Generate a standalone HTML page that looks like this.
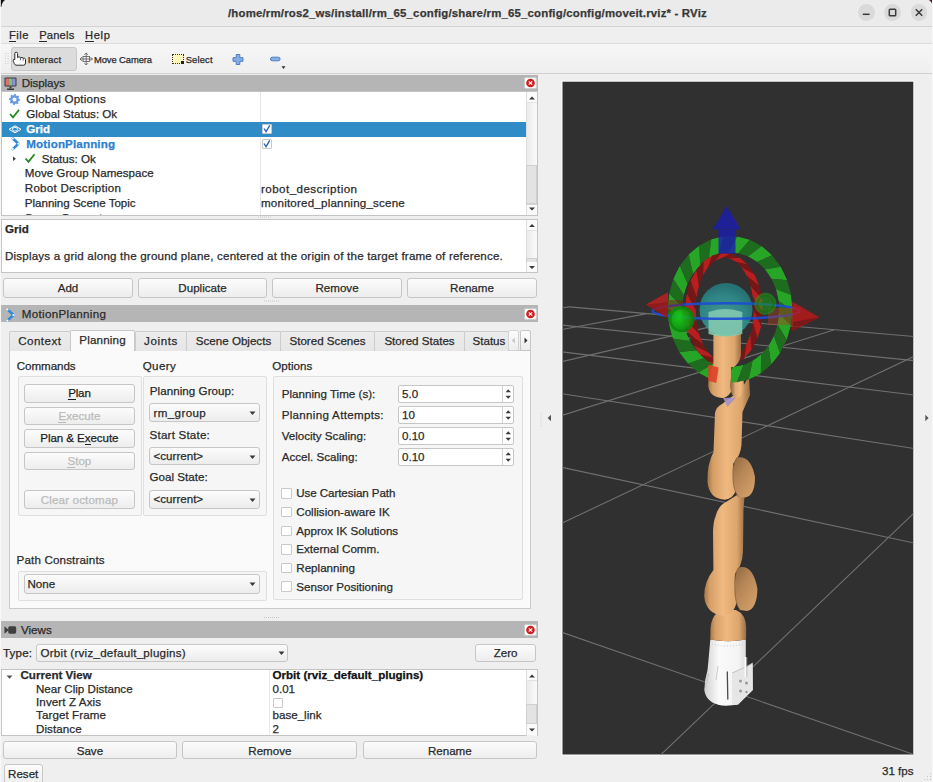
<!DOCTYPE html><html><head><meta charset="utf-8"><style>
*{margin:0;padding:0;box-sizing:border-box}
html,body{width:933px;height:782px;overflow:hidden;background:#efefef}
body{position:relative;font-family:"Liberation Sans",sans-serif;font-size:11.6px;color:#2a2a2a}
.a{position:absolute}
.t{position:absolute;white-space:nowrap;-webkit-text-stroke:0.25px currentColor}
.btn{position:absolute;border:1px solid #c6c6c6;border-radius:3px;background:linear-gradient(#fcfcfc,#ededed)}
.hdr{position:absolute;left:1px;width:537px;background:#b5b5b5}
.cls{position:absolute;width:13px;height:12px;background:#fcfcfc;border:1px solid #cdcdcd;border-radius:2px}
.tree{position:absolute;background:#fff;border:1px solid #c4c4c4}
.sb{position:absolute;width:11px;background:linear-gradient(90deg,#ebebeb,#fafafa);border-left:1px solid #dedede}
.grp{position:absolute;border:1px solid #dfdfdf;border-radius:2px;background:#f6f6f6}
.combo{position:absolute;border:1px solid #c6c6c6;border-radius:3px;background:linear-gradient(#fcfcfc,#ececec)}
.spin{position:absolute;border:1px solid #c6c6c6;border-radius:2px;background:#fff}
.cb{position:absolute;width:11px;height:11px;border:1px solid #c9c9c9;background:#fff;border-radius:1px}
.tab{position:absolute;top:331px;height:20px;border:1px solid #cccccc;border-bottom:none;border-radius:2px 2px 0 0;background:linear-gradient(#ececec,#e6e6e6)}
.dis{color:#bbbbbb}
u{text-decoration:none;border-bottom:1px solid currentColor}
</style></head><body>
<div class="a" style="left:0;top:0;width:933px;height:27px;background:#ebebeb;border-bottom:1px solid #d3d3d3"></div>
<div class="a" style="left:0;top:0;width:1px;height:782px;background:#f8f8f8"></div><div class="a" style="left:932px;top:0;width:1px;height:782px;background:#f8f8f8"></div>
<div class="t" style="left:228px;top:6.15px;font-size:11.4px;line-height:14px;font-weight:bold;color:#383838;letter-spacing:0.192px;">/home/rm/ros2_ws/install/rm_65_config/share/rm_65_config/config/moveit.rviz* - RViz</div>
<div class="a" style="left:857.8000000000001px;top:4.1px;width:16.8px;height:16.8px;border-radius:50%;background:#dadada"></div>
<div class="a" style="left:884.1px;top:4.1px;width:16.8px;height:16.8px;border-radius:50%;background:#dadada"></div>
<div class="a" style="left:910.6px;top:4.1px;width:16.8px;height:16.8px;border-radius:50%;background:#dadada"></div>
<svg class="a" style="left:0;top:0" width="933" height="27"><g stroke="#3a3a3a" stroke-width="1.5" fill="none"><line x1="862.8" y1="14.3" x2="869.6" y2="14.3"/><rect x="889.3" y="9.3" width="6.4" height="6.4" rx="0.8"/><line x1="915.8" y1="9.3" x2="922.2" y2="15.7"/><line x1="922.2" y1="9.3" x2="915.8" y2="15.7"/></g><path d="M0.8 0 L5 0 Q2 2 1.3 7 L0.8 7 Z" fill="#111"/><path d="M929 0 L932 0 L932 3.5 Q931 1 929 0Z" fill="#6a0a30"/></svg>
<div class="a" style="left:1px;top:27px;width:931px;height:17px;background:#efefef;border-bottom:1px solid #dcdcdc"></div>
<div class="t" style="left:9px;top:28.22px;font-size:11.2px;line-height:14px;letter-spacing:0.451px;"><u>F</u>ile</div>
<div class="t" style="left:39.2px;top:28.22px;font-size:11.2px;line-height:14px;letter-spacing:0.176px;"><u>P</u>anels</div>
<div class="t" style="left:84.9px;top:28.22px;font-size:11.2px;line-height:14px;letter-spacing:0.690px;"><u>H</u>elp</div>
<div class="a" style="left:1px;top:44px;width:931px;height:30px;background:linear-gradient(#f6f6f6,#efefef);border-bottom:1px solid #d0d0d0"></div>
<div class="a" style="left:11px;top:47px;width:66px;height:24px;background:#dcdcdc;border:1px solid #c8c8c8;border-radius:3px"></div>
<div class="t" style="left:27.7px;top:53.57px;font-size:9.6px;line-height:12px;letter-spacing:0.214px;">Interact</div>
<div class="t" style="left:94px;top:53.64px;font-size:9.4px;line-height:12px;letter-spacing:-0.087px;">Move Camera</div>
<div class="a" style="left:172px;top:53.5px;width:12px;height:10.5px;background:#fbf6bd;border:1px dotted #333"></div><div class="a" style="left:181px;top:61px;width:3px;height:3px;background:#222"></div>
<div class="t" style="left:185.7px;top:53.64px;font-size:9.4px;line-height:12px;letter-spacing:0.167px;">Select</div>
<svg class="a" style="left:0;top:44px" width="300" height="30"><path d="M236.2 10.5 h3.6 v3.2 h3.2 v3.6 h-3.2 v3.2 h-3.6 v-3.2 h-3.2 v-3.6 h3.2 z" fill="#86aee4" stroke="#4e7ec4" stroke-width="1" stroke-linejoin="round"/><rect x="270.5" y="13.2" width="9.6" height="3.6" rx="1.8" fill="#86aee4" stroke="#4e7ec4" stroke-width="1"/><path d="M281.5 22.3 h4 l-2 2.6z" fill="#333"/><path d="M15.6 21.2 L14.4 19.6 Q13 17.6 13.2 16.1 Q13.5 14.8 14.8 15.6 L14.8 9.6 Q14.8 8.2 16.2 8.2 Q17.6 8.2 17.6 9.6 L17.6 13.6 Q18 12.8 19.2 12.9 Q20.4 13 20.5 14.1 Q20.9 13.3 22 13.4 Q23.2 13.5 23.2 14.6 Q23.7 14 24.5 14.2 Q25.5 14.5 25.5 15.6 L25.5 19 Q25.5 21.2 23.6 21.2 Z" fill="#fff" stroke="#2a2a2a" stroke-width="1" stroke-linejoin="round"/><path d="M20.5 14.1 v2.2 M23.2 14.6 v2" stroke="#2a2a2a" stroke-width="0.7"/><g stroke="#666" stroke-width="0.9" fill="none"><path d="M86.2 9 v12 M80 15 h12.5 M84.4 10.8 l1.8-1.8 1.8 1.8 M84.4 19.2 l1.8 1.8 1.8-1.8 M81.8 13.2 l-1.8 1.8 1.8 1.8 M90.6 13.2 l1.8 1.8-1.8 1.8"/><rect x="83" y="12.5" width="6.5" height="5"/></g><g fill="#cfcfcf"><rect x="5" y="9" width="1" height="1"/><rect x="5" y="11.5" width="1" height="1"/><rect x="5" y="14" width="1" height="1"/><rect x="5" y="16.5" width="1" height="1"/><rect x="5" y="19" width="1" height="1"/><rect x="7.5" y="9" width="1" height="1"/><rect x="7.5" y="11.5" width="1" height="1"/><rect x="7.5" y="14" width="1" height="1"/><rect x="7.5" y="16.5" width="1" height="1"/><rect x="7.5" y="19" width="1" height="1"/></g></svg>
<div class="hdr" style="top:75px;height:17px"></div>
<div class="t" style="left:21.7px;top:76.18px;font-size:11.6px;line-height:14px;letter-spacing:-0.073px;">Displays</div>
<div class="cls" style="left:523.5px;top:77px"></div><svg class="a" style="left:523.5px;top:77px" width="13" height="12"><circle cx="6.5" cy="6" r="4.3" fill="#d01c1c"/><path d="M4.8 4.3 l3.4 3.4 M8.2 4.3 l-3.4 3.4" stroke="#fff" stroke-width="1.2"/></svg>
<svg class="a" style="left:3px;top:76px" width="16" height="15"><rect x="1.5" y="1.5" width="12" height="9" rx="1" fill="#3a3a3a"/><rect x="2.5" y="2.5" width="3.4" height="7" fill="#e07070"/><rect x="5.9" y="2.5" width="3.3" height="7" fill="#70c870"/><rect x="9.2" y="2.5" width="3.3" height="7" fill="#9090e0"/><rect x="6.5" y="10.5" width="2" height="2" fill="#3a3a3a"/><rect x="4" y="12.5" width="7" height="1.5" fill="#3a3a3a"/></svg>
<div class="tree" style="left:1px;top:91px;width:537px;height:125px"></div>
<div class="a" style="left:2px;top:92px;width:524px;height:123px;overflow:hidden">
<div class="a" style="left:257.5px;top:0;width:1px;height:123px;background:#e6e6e6"></div>
<div class="a" style="left:0;top:30px;width:524px;height:14.5px;background:#308cc6"></div>
<div class="t" style="left:24.3px;top:0.48px;font-size:11.6px;line-height:14px;letter-spacing:0.207px;">Global Options</div>
<div class="t" style="left:24.3px;top:15.28px;font-size:11.6px;line-height:14px;">Global Status: Ok</div>
<div class="t" style="left:24.3px;top:30.08px;font-size:11.6px;line-height:14px;color:#fff;font-weight:bold">Grid</div>
<div class="t" style="left:24.3px;top:44.88px;font-size:11.6px;line-height:14px;color:#2b7fd0;font-weight:bold;letter-spacing:0.136px;">MotionPlanning</div>
<div class="t" style="left:39.7px;top:59.68px;font-size:11.6px;line-height:14px;letter-spacing:-0.003px;">Status: Ok</div>
<div class="t" style="left:22.8px;top:74.48px;font-size:11.6px;line-height:14px;">Move Group Namespace</div>
<div class="t" style="left:22.8px;top:89.28px;font-size:11.6px;line-height:14px;letter-spacing:0.253px;">Robot Description</div>
<div class="t" style="left:22.8px;top:104.08px;font-size:11.6px;line-height:14px;letter-spacing:-0.026px;">Planning Scene Topic</div>
<div class="t" style="left:22.8px;top:118.88px;font-size:11.6px;line-height:14px;">Scene Geometry</div>
<div class="t" style="left:259px;top:89.58px;font-size:11.6px;line-height:14px;letter-spacing:0.440px;">robot_description</div>
<div class="t" style="left:259px;top:104.28px;font-size:11.6px;line-height:14px;letter-spacing:0.199px;">monitored_planning_scene</div>
<div class="cb" style="left:259.5px;top:31.5px;width:10.5px;height:10.5px"></div><div class="cb" style="left:259.5px;top:46.5px;width:10.5px;height:10.5px"></div>
<svg class="a" style="left:0;top:0" width="300" height="123"><path d="M262 36.5 l2 3.2 l3.8-6.4" stroke="#2860c0" stroke-width="1.3" fill="none"/><path d="M262 51.5 l2 3.2 l3.8-6.4" stroke="#2860c0" stroke-width="1.3" fill="none"/><path d="M8 22 l3 3.4 l6-7.6" stroke="#178a17" stroke-width="1.7" fill="none"/><path d="M23.5 66.5 l3 3.4 l6-7.6" stroke="#178a17" stroke-width="1.7" fill="none"/><path d="M11 64.5 l3 2.3 l-3 2.3z" fill="#444"/><path d="M12.50 1.90 L13.59 2.01 L14.15 3.53 L14.89 3.92 L16.46 3.54 L17.16 4.39 L16.47 5.85 L16.72 6.66 L18.10 7.50 L17.99 8.59 L16.47 9.15 L16.08 9.89 L16.46 11.46 L15.61 12.16 L14.15 11.47 L13.34 11.72 L12.50 13.10 L11.41 12.99 L10.85 11.47 L10.11 11.08 L8.54 11.46 L7.84 10.61 L8.53 9.15 L8.28 8.34 L6.90 7.50 L7.01 6.41 L8.53 5.85 L8.92 5.11 L8.54 3.54 L9.39 2.84 L10.85 3.53 L11.66 3.28Z M14.50 7.5 A2 2 0 1 0 10.50 7.5 A2 2 0 1 0 14.50 7.5Z" fill="#6a9be0" fill-rule="evenodd"/><path d="M7 37.3 l6-3.5 l6 3.5 l-6 3.5z" stroke="#fff" stroke-width="1" fill="none"/><ellipse cx="13" cy="37.3" rx="2.6" ry="1.9" stroke="#fff" stroke-width="0.9" fill="none"/><path d="M10.8 46.5 l5.6 5.3 l-5.6 5.3" stroke="#2f8ad8" stroke-width="2.6" fill="none" stroke-linejoin="round" stroke-linecap="round"/><circle cx="10.8" cy="46.5" r="1" fill="#fff"/><circle cx="16.4" cy="51.8" r="1" fill="#fff"/><circle cx="10.8" cy="57.1" r="1" fill="#fff"/></svg>
</div>
<div class="sb" style="left:526px;top:92px;height:123px"></div>
<div class="a" style="left:526px;top:92px;width:11px;height:11px;background:#fafafa;border-left:1px solid #dedede;border-bottom:1px solid #e2e2e2"></div>
<div class="a" style="left:526px;top:204px;width:11px;height:11px;background:#fafafa;border-left:1px solid #dedede;border-top:1px solid #d6d6d6"></div>
<div class="a" style="left:526px;top:165px;width:11px;height:39px;background:#e3e3e3;border:1px solid #d0d0d0"></div>
<svg class="a" style="left:526px;top:92px" width="12" height="124"><path d="M3 7.5 h6 l-3-3z M3 115.5 h6 l-3 3z" fill="#3a3a3a"/></svg>
<div class="tree" style="left:1px;top:219px;width:537px;height:54px"></div>
<div class="t" style="left:5px;top:222.48px;font-size:11.6px;line-height:14px;font-weight:bold;color:#111letter-spacing:0.052px;">Grid</div>
<div class="t" style="left:5px;top:248.78px;font-size:11.6px;line-height:14px;letter-spacing:0.193px;">Displays a grid along the ground plane, centered at the origin of the target frame of reference.</div>
<div class="sb" style="left:526px;top:220px;height:52px"></div>
<div class="a" style="left:526px;top:220px;width:11px;height:11px;background:#fafafa;border-left:1px solid #dedede;border-bottom:1px solid #e2e2e2"></div>
<div class="a" style="left:526px;top:258px;width:11px;height:5px;background:#e3e3e3;border:1px solid #d0d0d0"></div>
<div class="a" style="left:526px;top:262px;width:11px;height:10px;background:#fafafa;border-left:1px solid #dedede"></div>
<svg class="a" style="left:526px;top:220px" width="12" height="52"><path d="M3 7 h6 l-3-3z M3 46 h6 l-3 3z" fill="#3a3a3a"/></svg>
<div class="btn" style="left:3px;top:278px;width:130px;height:20px"></div>
<div class="t" style="left:3px;width:130px;text-align:center;top:280.78px;font-size:11.6px;line-height:14px;">Add</div>
<div class="btn" style="left:138px;top:278px;width:129px;height:20px"></div>
<div class="t" style="left:138px;width:129px;text-align:center;top:280.78px;font-size:11.6px;line-height:14px;">Duplicate</div>
<div class="btn" style="left:272px;top:278px;width:130px;height:20px"></div>
<div class="t" style="left:272px;width:130px;text-align:center;top:280.78px;font-size:11.6px;line-height:14px;">Remove</div>
<div class="btn" style="left:407px;top:278px;width:130px;height:20px"></div>
<div class="t" style="left:407px;width:130px;text-align:center;top:280.78px;font-size:11.6px;line-height:14px;">Rename</div>
<div class="hdr" style="top:305px;height:17px"></div>
<div class="t" style="left:21.8px;top:307.28px;font-size:11.6px;line-height:14px;letter-spacing:0.328px;">MotionPlanning</div>
<div class="cls" style="left:523.5px;top:308px"></div><svg class="a" style="left:523.5px;top:308px" width="13" height="12"><circle cx="6.5" cy="6" r="4.3" fill="#d01c1c"/><path d="M4.8 4.3 l3.4 3.4 M8.2 4.3 l-3.4 3.4" stroke="#fff" stroke-width="1.2"/></svg>
<svg class="a" style="left:5px;top:307px" width="14" height="16"><path d="M2.5 2.5 l6 5.5 l-6 5.5" stroke="#2f8ad8" stroke-width="2.4" fill="none" stroke-linejoin="round"/><circle cx="2.5" cy="2.5" r="1.1" fill="#fff"/><circle cx="8.5" cy="8" r="1.1" fill="#fff"/><circle cx="2.5" cy="13.5" r="1.1" fill="#fff"/></svg>
<div class="a" style="left:8.5px;top:350px;width:522.5px;height:259px;background:#fafafa;border:1px solid #cbcbcb"></div>
<div class="tab" style="left:8.6px;width:62.4px"></div>
<div class="t" style="left:8.6px;width:62.4px;text-align:center;top:334.28px;font-size:11.6px;line-height:14px;letter-spacing:0.439px;">Context</div>
<div class="tab" style="left:135px;width:52.0px"></div>
<div class="t" style="left:135px;width:52px;text-align:center;top:333.98px;font-size:11.6px;line-height:14px;letter-spacing:0.581px;">Joints</div>
<div class="tab" style="left:186px;width:95.0px"></div>
<div class="t" style="left:186px;width:95px;text-align:center;top:333.98px;font-size:11.6px;line-height:14px;letter-spacing:-0.001px;">Scene Objects</div>
<div class="tab" style="left:280px;width:95.0px"></div>
<div class="t" style="left:280px;width:95px;text-align:center;top:333.98px;font-size:11.6px;line-height:14px;">Stored Scenes</div>
<div class="tab" style="left:374px;width:91.0px"></div>
<div class="t" style="left:374px;width:91px;text-align:center;top:333.98px;font-size:11.6px;line-height:14px;">Stored States</div>
<div class="tab" style="left:464px;width:45px"></div>
<div class="a" style="left:464px;top:331px;width:44px;height:20px;overflow:hidden"><div class="t" style="left:8.5px;top:2.98px;font-size:11.6px;line-height:14px;">Status</div></div>
<div class="tab" style="left:69.8px;top:329.5px;width:65.5px;height:21.5px;background:#fafafa;border-color:#c8c8c8"></div>
<div class="t" style="left:69.8px;width:65.50000000000001px;text-align:center;top:333.48px;font-size:11.6px;line-height:14px;letter-spacing:0.168px;">Planning</div>
<div class="btn" style="left:508px;top:329.5px;width:11px;height:21.5px;border-radius:2px;border-color:#d4d4d4"></div><div class="btn" style="left:519.5px;top:329.5px;width:11.5px;height:21.5px;border-radius:2px"></div>
<svg class="a" style="left:508px;top:330px" width="24" height="22"><path d="M6.8 7.5 v6 l-3-3z" fill="#c8c8c8"/><path d="M16.5 7.5 v6 l3-3z" fill="#333"/></svg>
<div class="t" style="left:16.8px;top:358.98px;font-size:11.6px;line-height:14px;letter-spacing:-0.069px;">Commands</div>
<div class="t" style="left:142.7px;top:358.98px;font-size:11.6px;line-height:14px;letter-spacing:0.380px;">Query</div>
<div class="t" style="left:272.3px;top:358.98px;font-size:11.6px;line-height:14px;">Options</div>
<div class="grp" style="left:17.5px;top:375.5px;width:124.5px;height:140.5px"></div>
<div class="grp" style="left:143.3px;top:375.5px;width:124px;height:140px"></div>
<div class="grp" style="left:273.3px;top:375.5px;width:249.5px;height:224.5px"></div>
<div class="btn" style="left:23.5px;top:383.5px;width:111.8px;height:19.1px"></div>
<div class="t" style="left:23.5px;width:111.80000000000001px;text-align:center;top:386.48px;font-size:11.6px;line-height:14px;color:#1e1e1e;letter-spacing:-0.173px;"><u>P</u>lan</div>
<div class="btn" style="left:23.5px;top:406.5px;width:111.8px;height:18.7px"></div>
<div class="t" style="left:23.5px;width:111.80000000000001px;text-align:center;top:409.18px;font-size:11.6px;line-height:14px;color:#bbbbbb;"><u>E</u>xecute</div>
<div class="btn" style="left:23.5px;top:429px;width:111.8px;height:18.8px"></div>
<div class="t" style="left:23.5px;width:111.80000000000001px;text-align:center;top:431.48px;font-size:11.6px;line-height:14px;color:#1e1e1e;letter-spacing:-0.084px;">Plan &amp; E<u>x</u>ecute</div>
<div class="btn" style="left:23.5px;top:451.5px;width:111.8px;height:18.8px"></div>
<div class="t" style="left:23.5px;width:111.80000000000001px;text-align:center;top:453.98px;font-size:11.6px;line-height:14px;color:#bbbbbb;"><u>S</u>top</div>
<div class="btn" style="left:23.5px;top:490.2px;width:111.8px;height:19.1px"></div>
<div class="t" style="left:23.5px;width:111.80000000000001px;text-align:center;top:492.58px;font-size:11.6px;line-height:14px;color:#bbbbbb;letter-spacing:0.158px;">Clear octomap</div>
<div class="t" style="left:149.8px;top:384.18px;font-size:11.6px;line-height:14px;letter-spacing:0.050px;">Planning Group:</div>
<div class="combo" style="left:149.3px;top:403.3px;width:110.7px;height:18.5px"></div><div class="t" style="left:153.5px;top:405.78px;font-size:11.6px;line-height:14px;letter-spacing:0.382px;">rm_group</div><svg class="a" style="left:249.2px;top:411px" width="8" height="5"><path d="M0.5 0.5 h6 l-3 3.5z" fill="#3a3a3a"/></svg>
<div class="t" style="left:149.6px;top:427.78px;font-size:11.6px;line-height:14px;letter-spacing:0.200px;">Start State:</div>
<div class="combo" style="left:149.3px;top:446.7px;width:110.7px;height:18.6px"></div><div class="t" style="left:153.5px;top:449.18px;font-size:11.6px;line-height:14px;">&lt;current&gt;</div><svg class="a" style="left:249.2px;top:454.5px" width="8" height="5"><path d="M0.5 0.5 h6 l-3 3.5z" fill="#3a3a3a"/></svg>
<div class="t" style="left:149.6px;top:470.48px;font-size:11.6px;line-height:14px;">Goal State:</div>
<div class="combo" style="left:149.3px;top:490.2px;width:110.7px;height:18.6px"></div><div class="t" style="left:153.5px;top:492.28px;font-size:11.6px;line-height:14px;">&lt;current&gt;</div><svg class="a" style="left:249.2px;top:498px" width="8" height="5"><path d="M0.5 0.5 h6 l-3 3.5z" fill="#3a3a3a"/></svg>
<div class="t" style="left:281.7px;top:387.28px;font-size:11.6px;line-height:14px;letter-spacing:0.010px;">Planning Time (s):</div>
<div class="spin" style="left:398.3px;top:384.8px;width:115.5px;height:18px"></div>
<div class="t" style="left:402px;top:387.28px;font-size:11.6px;line-height:14px;">5.0</div>
<svg class="a" style="left:502px;top:384.8px" width="12" height="18"><line x1="0.5" y1="1" x2="0.5" y2="17" stroke="#d2d2d2"/><path d="M3.5 7.3 h5.5 l-2.75-3z M3.5 10.7 h5.5 l-2.75 3z" fill="#3a3a3a"/></svg>
<div class="t" style="left:281.7px;top:408.28px;font-size:11.6px;line-height:14px;letter-spacing:0.301px;">Planning Attempts:</div>
<div class="spin" style="left:398.3px;top:405.8px;width:115.5px;height:18px"></div>
<div class="t" style="left:402px;top:408.28px;font-size:11.6px;line-height:14px;">10</div>
<svg class="a" style="left:502px;top:405.8px" width="12" height="18"><line x1="0.5" y1="1" x2="0.5" y2="17" stroke="#d2d2d2"/><path d="M3.5 7.3 h5.5 l-2.75-3z M3.5 10.7 h5.5 l-2.75 3z" fill="#3a3a3a"/></svg>
<div class="t" style="left:281.7px;top:429.28px;font-size:11.6px;line-height:14px;">Velocity Scaling:</div>
<div class="spin" style="left:398.3px;top:426.8px;width:115.5px;height:18px"></div>
<div class="t" style="left:402px;top:429.28px;font-size:11.6px;line-height:14px;">0.10</div>
<svg class="a" style="left:502px;top:426.8px" width="12" height="18"><line x1="0.5" y1="1" x2="0.5" y2="17" stroke="#d2d2d2"/><path d="M3.5 7.3 h5.5 l-2.75-3z M3.5 10.7 h5.5 l-2.75 3z" fill="#3a3a3a"/></svg>
<div class="t" style="left:281.7px;top:450.28px;font-size:11.6px;line-height:14px;">Accel. Scaling:</div>
<div class="spin" style="left:398.3px;top:447.8px;width:115.5px;height:18px"></div>
<div class="t" style="left:402px;top:450.28px;font-size:11.6px;line-height:14px;">0.10</div>
<svg class="a" style="left:502px;top:447.8px" width="12" height="18"><line x1="0.5" y1="1" x2="0.5" y2="17" stroke="#d2d2d2"/><path d="M3.5 7.3 h5.5 l-2.75-3z M3.5 10.7 h5.5 l-2.75 3z" fill="#3a3a3a"/></svg>
<div class="cb" style="left:281.3px;top:488.30px;width:10.5px;height:10.5px"></div>
<div class="t" style="left:296.3px;top:486.48px;font-size:11.6px;line-height:14px;letter-spacing:-0.084px;">Use Cartesian Path</div>
<div class="cb" style="left:281.3px;top:506.92px;width:10.5px;height:10.5px"></div>
<div class="t" style="left:296.3px;top:505.10px;font-size:11.6px;line-height:14px;">Collision-aware IK</div>
<div class="cb" style="left:281.3px;top:525.54px;width:10.5px;height:10.5px"></div>
<div class="t" style="left:296.3px;top:523.72px;font-size:11.6px;line-height:14px;">Approx IK Solutions</div>
<div class="cb" style="left:281.3px;top:544.16px;width:10.5px;height:10.5px"></div>
<div class="t" style="left:296.3px;top:542.34px;font-size:11.6px;line-height:14px;">External Comm.</div>
<div class="cb" style="left:281.3px;top:562.78px;width:10.5px;height:10.5px"></div>
<div class="t" style="left:296.3px;top:560.96px;font-size:11.6px;line-height:14px;">Replanning</div>
<div class="cb" style="left:281.3px;top:581.40px;width:10.5px;height:10.5px"></div>
<div class="t" style="left:296.3px;top:579.58px;font-size:11.6px;line-height:14px;">Sensor Positioning</div>
<div class="t" style="left:16.6px;top:553.48px;font-size:11.6px;line-height:14px;letter-spacing:0.152px;">Path Constraints</div>
<div class="grp" style="left:17.5px;top:570.5px;width:249.7px;height:30px"></div>
<div class="combo" style="left:23.5px;top:574.4px;width:236.5px;height:19.2px"></div><div class="t" style="left:27.5px;top:576.98px;font-size:11.6px;line-height:14px;">None</div><svg class="a" style="left:249.2px;top:582.3px" width="8" height="5"><path d="M0.5 0.5 h6 l-3 3.5z" fill="#3a3a3a"/></svg>
<svg class="a" style="left:0;top:0" width="540" height="782"><g fill="#c9c9c9"><rect x="258" y="216.5" width="1" height="1"/><rect x="260" y="216.5" width="1" height="1"/><rect x="262" y="216.5" width="1" height="1"/><rect x="264" y="216.5" width="1" height="1"/><rect x="266" y="216.5" width="1" height="1"/><rect x="268" y="216.5" width="1" height="1"/><rect x="270" y="216.5" width="1" height="1"/><rect x="264" y="300.5" width="1" height="1"/><rect x="266" y="300.5" width="1" height="1"/><rect x="268" y="300.5" width="1" height="1"/><rect x="270" y="300.5" width="1" height="1"/><rect x="272" y="300.5" width="1" height="1"/><rect x="274" y="300.5" width="1" height="1"/><rect x="276" y="300.5" width="1" height="1"/><rect x="278" y="300.5" width="1" height="1"/><rect x="264" y="617" width="1" height="1"/><rect x="266" y="617" width="1" height="1"/><rect x="268" y="617" width="1" height="1"/><rect x="270" y="617" width="1" height="1"/><rect x="272" y="617" width="1" height="1"/><rect x="274" y="617" width="1" height="1"/><rect x="276" y="617" width="1" height="1"/><rect x="278" y="617" width="1" height="1"/></g></svg>
<div class="hdr" style="top:621.3px;height:16.7px"></div>
<div class="t" style="left:21px;top:622.68px;font-size:11.6px;line-height:14px;">Views</div>
<div class="cls" style="left:523.7px;top:623.8px"></div><svg class="a" style="left:523.7px;top:623.8px" width="13" height="12"><circle cx="6.5" cy="6" r="4.3" fill="#d01c1c"/><path d="M4.8 4.3 l3.4 3.4 M8.2 4.3 l-3.4 3.4" stroke="#fff" stroke-width="1.2"/></svg>
<svg class="a" style="left:3px;top:622px" width="16" height="16"><path d="M1.5 4.3 l4.3 3.7 l-4.3 3.7z" fill="#3f3f3f"/><rect x="5.2" y="4.3" width="8" height="7.4" rx="1.6" fill="#3f3f3f"/></svg>
<div class="t" style="left:3px;top:645.98px;font-size:11.6px;line-height:14px;letter-spacing:0.160px;">Type:</div>
<div class="combo" style="left:36.4px;top:644px;width:252px;height:18px"></div><div class="t" style="left:40.5px;top:645.98px;font-size:11.6px;line-height:14px;letter-spacing:0.246px;">Orbit (rviz_default_plugins)</div><svg class="a" style="left:278px;top:651px" width="8" height="5"><path d="M0.5 0.5 h6 l-3 3.5z" fill="#3a3a3a"/></svg>
<div class="btn" style="left:474.8px;top:643.7px;width:61.7px;height:18.3px"></div><div class="t" style="left:474.8px;width:61.69999999999999px;text-align:center;top:645.98px;font-size:11.6px;line-height:14px;">Zero</div>
<div class="tree" style="left:1px;top:668.5px;width:537px;height:67.5px"></div>
<div class="a" style="left:2px;top:669.5px;width:524px;height:65.5px;overflow:hidden">
<div class="a" style="left:267px;top:0;width:1px;height:66px;background:#e6e6e6"></div>
<div class="t" style="left:18.5px;top:-1.02px;font-size:11.6px;line-height:14px;font-weight:bold;color:#111letter-spacing:0.190px;">Current View</div><div class="t" style="left:270.5px;top:-1.02px;font-size:11.6px;line-height:14px;font-weight:bold;color:#111">Orbit (rviz_default_plugins)</div>
<div class="t" style="left:34px;top:12.28px;font-size:11.6px;line-height:14px;letter-spacing:-0.003px;">Near Clip Distance</div><div class="t" style="left:270.5px;top:12.28px;font-size:11.6px;line-height:14px;">0.01</div>
<div class="t" style="left:34px;top:25.58px;font-size:11.6px;line-height:14px;letter-spacing:0.109px;">Invert Z Axis</div><div class="t" style="left:270.5px;top:25.58px;font-size:11.6px;line-height:14px;"></div>
<div class="t" style="left:34px;top:38.88px;font-size:11.6px;line-height:14px;letter-spacing:0.095px;">Target Frame</div><div class="t" style="left:270.5px;top:38.88px;font-size:11.6px;line-height:14px;">base_link</div>
<div class="t" style="left:34px;top:52.18px;font-size:11.6px;line-height:14px;letter-spacing:0.070px;">Distance</div><div class="t" style="left:270.5px;top:52.18px;font-size:11.6px;line-height:14px;">2</div>
<div class="cb" style="left:270.5px;top:28px;width:10px;height:10px"></div>
<svg class="a" style="left:0;top:0" width="20" height="20"><path d="M4.5 5.5 h6 l-3 3.3z" fill="#555"/></svg>
</div>
<div class="sb" style="left:526px;top:669.5px;height:66px"></div>
<div class="a" style="left:526px;top:669.5px;width:11px;height:11px;background:#fafafa;border-left:1px solid #dedede;border-bottom:1px solid #e2e2e2"></div>
<div class="a" style="left:526px;top:704px;width:11px;height:20px;background:#e3e3e3;border:1px solid #d0d0d0"></div>
<div class="a" style="left:526px;top:724px;width:11px;height:11px;background:#fafafa;border-left:1px solid #dedede"></div>
<svg class="a" style="left:526px;top:669.5px" width="12" height="66"><path d="M3 7.5 h6 l-3-3z M3 58.5 h6 l-3 3z" fill="#3a3a3a"/></svg>
<div class="btn" style="left:3.2px;top:741.3px;width:173.4px;height:18.2px"></div><div class="t" style="left:3.2px;width:173.4px;text-align:center;top:743.68px;font-size:11.6px;line-height:14px;">Save</div>
<div class="btn" style="left:182.3px;top:741.3px;width:175.2px;height:18.2px"></div><div class="t" style="left:182.3px;width:175.2px;text-align:center;top:743.68px;font-size:11.6px;line-height:14px;">Remove</div>
<div class="btn" style="left:362.6px;top:741.3px;width:174.4px;height:18.2px"></div><div class="t" style="left:362.6px;width:174.39999999999998px;text-align:center;top:743.68px;font-size:11.6px;line-height:14px;">Rename</div>
<div class="btn" style="left:3.5px;top:764.3px;width:39.4px;height:22px"></div><div class="t" style="left:3.5px;width:39.4px;text-align:center;top:766.68px;font-size:11.6px;line-height:14px;">Reset</div>
<div class="t" style="left:882px;top:763.78px;font-size:11.6px;line-height:14px;">31 fps</div>
<svg class="a" style="left:922px;top:771px" width="12" height="12"><g fill="#c4c4c4"><rect x="8" y="2" width="1" height="1"/><rect x="8" y="5" width="1" height="1"/><rect x="5" y="5" width="1" height="1"/><rect x="8" y="8" width="1" height="1"/><rect x="5" y="8" width="1" height="1"/><rect x="2" y="8" width="1" height="1"/></g></svg>
<svg class="a" style="left:561px;top:80px" width="355" height="677">
<defs><clipPath id="vclip"><rect x="1.5" y="1.7" width="350.8" height="672.8"/></clipPath></defs>
<rect x="0.5" y="0.7" width="352.8" height="674.8" fill="#fff"/>
<rect x="1.5" y="1.7" width="350.8" height="672.8" fill="#303030"/>
<g clip-path="url(#vclip)"><g stroke="#707070" stroke-width="1.1"><line x1="8.1" y1="226.9" x2="1750.4" y2="376.6"/><line x1="-65.2" y1="238.4" x2="2080.2" y2="454.9"/><line x1="-156.6" y1="252.6" x2="2703.0" y2="602.7"/><line x1="-273.6" y1="270.9" x2="4322.4" y2="987.1"/><line x1="-428.7" y1="295.1" x2="18891.9" y2="4444.7"/><line x1="-644.1" y1="328.7" x2="100655.8" y2="35462.2"/><line x1="-963.6" y1="378.5" x2="35910.4" y2="33921.6"/><line x1="-1486.6" y1="460.1" x2="-24840.1" y2="34009.2"/><line x1="-2498.4" y1="618.0" x2="-86299.2" y2="34097.7"/><line x1="-5285.2" y1="1052.8" x2="-148479.4" y2="34187.3"/><line x1="-47874.3" y1="7697.8" x2="-211393.3" y2="34277.9"/><line x1="8.1" y1="226.9" x2="-47874.3" y2="7697.8"/><line x1="85.7" y1="233.6" x2="-181784.8" y2="34363.8"/><line x1="173.4" y1="241.1" x2="-140624.1" y2="33351.5"/><line x1="273.4" y1="249.7" x2="-110369.3" y2="35042.1"/><line x1="388.6" y1="259.6" x2="-70850.5" y2="33992.5"/><line x1="522.7" y1="271.1" x2="-33774.3" y2="33007.8"/><line x1="680.7" y1="284.7" x2="1111.3" y2="34653.7"/><line x1="869.6" y1="300.9" x2="36493.1" y2="33633.3"/><line x1="1099.5" y1="320.7" x2="75366.1" y2="35335.9"/><line x1="1385.3" y1="345.3" x2="108928.0" y2="34278.0"/><line x1="1750.4" y1="376.6" x2="140417.7" y2="33285.5"/></g>

<defs>
<linearGradient id="tan" x1="0" x2="1" y1="0" y2="0">
 <stop offset="0" stop-color="#a8784a"/><stop offset="0.14" stop-color="#d59f68"/><stop offset="0.45" stop-color="#efb980"/><stop offset="0.8" stop-color="#dca56c"/><stop offset="1" stop-color="#9a6e45"/>
</linearGradient>
<linearGradient id="tanj" x1="0" x2="1" y1="0" y2="0">
 <stop offset="0" stop-color="#8c6440"/><stop offset="0.22" stop-color="#b4855a"/><stop offset="0.4" stop-color="#e2ad75"/><stop offset="0.75" stop-color="#eeb97f"/><stop offset="1" stop-color="#d09c66"/>
</linearGradient>
<linearGradient id="wht" x1="0" x2="1" y1="0" y2="0">
 <stop offset="0" stop-color="#d0d0d0"/><stop offset="0.3" stop-color="#fafafa"/><stop offset="0.7" stop-color="#f4f4f4"/><stop offset="1" stop-color="#c8c8c8"/>
</linearGradient>
<linearGradient id="tanf" x1="0" x2="1" y1="0" y2="0"><stop offset="0" stop-color="#b88856"/><stop offset="0.3" stop-color="#e2ab73"/><stop offset="0.7" stop-color="#e9b47a"/><stop offset="1" stop-color="#b7854f"/></linearGradient>
<linearGradient id="cyl" x1="0" y1="0" x2="0.8" y2="1"><stop offset="0" stop-color="#8e6843"/><stop offset="0.45" stop-color="#b88757"/><stop offset="1" stop-color="#d3a06a"/></linearGradient>
<radialGradient id="cyan" cx="0.45" cy="0.65" r="0.6">
 <stop offset="0" stop-color="#45aaa6"/><stop offset="0.7" stop-color="#2f9494"/><stop offset="1" stop-color="#257d80"/>
</radialGradient>
<radialGradient id="gball" cx="0.4" cy="0.45" r="0.6">
 <stop offset="0" stop-color="#18d418"/><stop offset="1" stop-color="#0e8a0e"/>
</radialGradient>
<clipPath id="gclip"><path clip-rule="evenodd" d="M667.6 309.4 A62.4 73.5 0 1 0 792.4 309.4 A62.4 73.5 0 1 0 667.6 309.4 Z M682.4000000000001 309.9 A48.3 57 0 1 0 779.0 309.9 A48.3 57 0 1 0 682.4000000000001 309.9 Z"/></clipPath>
<clipPath id="frontclip"><rect x="731" y="355" width="40" height="40"/></clipPath>
<clipPath id="rclip"><path clip-rule="evenodd" d="M685 309.7 A39 57 0 1 0 763 309.7 A39 57 0 1 0 685 309.7 Z M695.8000000000001 309.7 A28.9 51.7 0 1 0 753.6 309.7 A28.9 51.7 0 1 0 695.8000000000001 309.7 Z"/></clipPath>
</defs>
<g transform="translate(-561,-80)">
 <!-- rings -->
 <g clip-path="url(#gclip)"><path d="M790.9 325.4 L786.7 340.0 L777.4 324.5 L778.9 312.7Z" fill="#27a527"/><path d="M786.7 340.0 L780.1 353.2 L773.8 335.7 L777.4 324.5Z" fill="#1e6c1e"/><path d="M780.1 353.2 L771.3 364.5 L768.3 345.7 L773.8 335.7Z" fill="#27a527"/><path d="M771.3 364.5 L760.6 373.4 L761.2 354.1 L768.3 345.7Z" fill="#1e6c1e"/><path d="M760.6 373.4 L748.7 379.5 L752.7 360.6 L761.2 354.1Z" fill="#27a527"/><path d="M748.7 379.5 L735.9 382.6 L743.3 364.9 L752.7 360.6Z" fill="#1e6c1e"/><path d="M735.9 382.6 L722.8 382.4 L733.3 366.8 L743.3 364.9Z" fill="#27a527"/><path d="M722.8 382.4 L710.1 379.1 L723.3 366.2 L733.3 366.8Z" fill="#1e6c1e"/><path d="M710.1 379.1 L698.2 372.7 L713.5 363.2 L723.3 366.2Z" fill="#27a527"/><path d="M698.2 372.7 L687.8 363.5 L704.5 357.8 L713.5 363.2Z" fill="#1e6c1e"/><path d="M687.8 363.5 L679.1 352.0 L696.6 350.3 L704.5 357.8Z" fill="#27a527"/><path d="M679.1 352.0 L672.7 338.6 L690.3 341.1 L696.6 350.3Z" fill="#1e6c1e"/><path d="M672.7 338.6 L668.8 323.9 L685.6 330.5 L690.3 341.1Z" fill="#27a527"/><path d="M668.8 323.9 L667.6 308.6 L683.0 318.9 L685.6 330.5Z" fill="#1e6c1e"/><path d="M667.6 308.6 L669.1 293.4 L682.5 307.1 L683.0 318.9Z" fill="#27a527"/><path d="M669.1 293.4 L673.3 278.8 L684.0 295.3 L682.5 307.1Z" fill="#1e6c1e"/><path d="M673.3 278.8 L679.9 265.6 L687.6 284.1 L684.0 295.3Z" fill="#27a527"/><path d="M679.9 265.6 L688.7 254.3 L693.1 274.1 L687.6 284.1Z" fill="#1e6c1e"/><path d="M688.7 254.3 L699.4 245.4 L700.2 265.7 L693.1 274.1Z" fill="#27a527"/><path d="M699.4 245.4 L711.3 239.3 L708.7 259.2 L700.2 265.7Z" fill="#1e6c1e"/><path d="M711.3 239.3 L724.1 236.2 L718.1 254.9 L708.7 259.2Z" fill="#27a527"/><path d="M724.1 236.2 L737.2 236.4 L728.1 253.0 L718.1 254.9Z" fill="#1e6c1e"/><path d="M737.2 236.4 L749.9 239.7 L738.1 253.6 L728.1 253.0Z" fill="#27a527"/><path d="M749.9 239.7 L761.8 246.1 L747.9 256.6 L738.1 253.6Z" fill="#1e6c1e"/><path d="M761.8 246.1 L772.2 255.3 L756.9 262.0 L747.9 256.6Z" fill="#27a527"/><path d="M772.2 255.3 L780.9 266.8 L764.8 269.5 L756.9 262.0Z" fill="#1e6c1e"/><path d="M780.9 266.8 L787.3 280.2 L771.1 278.7 L764.8 269.5Z" fill="#27a527"/><path d="M787.3 280.2 L791.2 294.9 L775.8 289.3 L771.1 278.7Z" fill="#1e6c1e"/><path d="M791.2 294.9 L792.4 310.2 L778.4 300.9 L775.8 289.3Z" fill="#27a527"/><path d="M792.4 310.2 L790.9 325.4 L778.9 312.7 L778.4 300.9Z" fill="#1e6c1e"/></g>
 <g clip-path="url(#rclip)"><path d="M761.3 326.5 L757.4 339.1 L752.8 322.1 L753.6 309.7Z" fill="#b81e1e"/><path d="M757.4 339.1 L751.6 349.9 L750.3 333.7 L752.8 322.1Z" fill="#741717"/><path d="M751.6 349.9 L744.2 358.4 L746.3 344.0 L750.3 333.7Z" fill="#b81e1e"/><path d="M744.2 358.4 L735.7 364.1 L741.1 352.2 L746.3 344.0Z" fill="#741717"/><path d="M735.7 364.1 L726.4 366.6 L734.9 358.0 L741.1 352.2Z" fill="#b81e1e"/><path d="M726.4 366.6 L717.0 365.8 L728.2 361.0 L734.9 358.0Z" fill="#741717"/><path d="M717.0 365.8 L708.1 361.7 L721.2 361.0 L728.2 361.0Z" fill="#b81e1e"/><path d="M708.1 361.7 L700.0 354.6 L714.5 358.0 L721.2 361.0Z" fill="#741717"/><path d="M700.0 354.6 L693.3 344.9 L708.3 352.2 L714.5 358.0Z" fill="#b81e1e"/><path d="M693.3 344.9 L688.5 333.2 L703.1 344.0 L708.3 352.2Z" fill="#741717"/><path d="M688.5 333.2 L685.7 320.1 L699.1 333.7 L703.1 344.0Z" fill="#b81e1e"/><path d="M685.7 320.1 L685.1 306.4 L696.6 322.1 L699.1 333.7Z" fill="#741717"/><path d="M685.1 306.4 L686.7 292.9 L695.8 309.7 L696.6 322.1Z" fill="#b81e1e"/><path d="M686.7 292.9 L690.6 280.3 L696.6 297.3 L695.8 309.7Z" fill="#741717"/><path d="M690.6 280.3 L696.4 269.5 L699.1 285.7 L696.6 297.3Z" fill="#b81e1e"/><path d="M696.4 269.5 L703.8 261.0 L703.1 275.4 L699.1 285.7Z" fill="#741717"/><path d="M703.8 261.0 L712.3 255.3 L708.3 267.2 L703.1 275.4Z" fill="#b81e1e"/><path d="M712.3 255.3 L721.6 252.8 L714.5 261.4 L708.3 267.2Z" fill="#741717"/><path d="M721.6 252.8 L731.0 253.6 L721.2 258.4 L714.5 261.4Z" fill="#b81e1e"/><path d="M731.0 253.6 L739.9 257.7 L728.2 258.4 L721.2 258.4Z" fill="#741717"/><path d="M739.9 257.7 L748.0 264.8 L734.9 261.4 L728.2 258.4Z" fill="#b81e1e"/><path d="M748.0 264.8 L754.7 274.5 L741.1 267.2 L734.9 261.4Z" fill="#741717"/><path d="M754.7 274.5 L759.5 286.2 L746.3 275.4 L741.1 267.2Z" fill="#b81e1e"/><path d="M759.5 286.2 L762.3 299.3 L750.3 285.7 L746.3 275.4Z" fill="#741717"/><path d="M762.3 299.3 L762.9 313.0 L752.8 297.3 L750.3 285.7Z" fill="#b81e1e"/><path d="M762.9 313.0 L761.3 326.5 L753.6 309.7 L752.8 297.3Z" fill="#741717"/></g>
 <!-- white base -->
 <path d="M710.3 639.5 Q728 643 745.8 639.5 L745.8 672 L752.6 663 L752.8 690 L738 704.5 Q730 706 722 705.5 Q706 703 704.3 690 Q704.5 680 707.5 670 L708.5 660 Z" fill="url(#wht)"/>
 <path d="M732 673 L745.8 667 L752.6 663 L752.8 690 L738 704.5 L732 705 Z" fill="#e6e6e6"/>
 <path d="M732 673 L745.8 667 L752.6 663" stroke="#b8b8b8" stroke-width="0.8" fill="none"/>
 <g fill="#9a9a9a"><circle cx="740.5" cy="681" r="1.5"/><circle cx="746.5" cy="683" r="1.5"/><circle cx="740.5" cy="691" r="1.5"/><circle cx="746.5" cy="692" r="1.2"/></g>
 <path d="M745.5 657 v20" stroke="#fafafa" stroke-width="2"/><path d="M746.8 657 v20" stroke="#a0a0a0" stroke-width="0.6"/>
 <path d="M727.3 672 L727.8 699" stroke="#4a4a4a" stroke-width="1.3" stroke-linecap="round"/>
 <path d="M708.5 673 L705.5 688" stroke="#c8c8c8" stroke-width="1.2"/>
 <path d="M718 666 L716 680" stroke="#c0c0c0" stroke-width="0.8"/>
 <path d="M712 644 Q728 648 744 644" stroke="#b9b9b9" stroke-width="0.8" stroke-dasharray="1 2" fill="none"/>
 <!-- base link -->
 <path d="M710.3 639.5 L710.5 628 Q712 612 724 610 L736 610 Q746 614 746.2 628 L746 639.5 Q728 643 710.3 639.5 Z" fill="url(#tan)"/>
 <!-- segment 3 -->
 <path d="M715.5 516.6 Q718 506 726 502 L745 490 L743.5 510 L743 552 Q742 566 735 574 L737 600 Q735 614 723.6 615.9 Q706 614 704.2 596.4 Q704 582 713.4 570 L713 531 Q713.5 521 715.5 516.6 Z" fill="url(#tan)"/>
 <path d="M738.5 567.5 Q753 564 757.4 588.7 Q757 609 747 611 L740 610 Q733 601 735 585 Q735 572 738.5 567.5 Z" fill="url(#cyl)"/>
 <path d="M738.5 567.5 Q733 575 735 590 Q735 603 740 610" stroke="#7d5a3a" stroke-width="1" fill="none" opacity="0.6"/>
 <!-- segment 2 -->
 <path d="M715 413 Q716 407 722 404 L741 390 L749 376 L750 395 L742.5 412 L741.5 445 Q740.5 456 733 464 L736 490 Q733 499 725 499.7 Q709 499 707.5 482 Q707 464 713.5 452 Z" fill="url(#tan)"/>
 <path d="M737 457.5 Q751 455 755 477.3 Q755 496 745 497.5 L738.5 497 Q731.5 488 733 473 Q733 462 737 457.5 Z" fill="url(#cyl)"/>
 <path d="M737 457.5 Q731.5 466 733 479 Q733.5 491 738.5 497" stroke="#7d5a3a" stroke-width="1" fill="none" opacity="0.6"/>
 <!-- top link -->
 <path d="M713.4 334 L741 334 L741 355 Q740 364 731 369 L731 392 Q727 398 722 398 Q709 397 708.2 385.3 Q708.5 372 713.4 364.5 Z" fill="url(#tan)"/>
 <ellipse cx="737" cy="385" rx="7" ry="13" fill="url(#tanj)"/>
 <path d="M723 398 L736 397.5 L727.5 407 Z" fill="#a292c8" opacity="0.9"/>
 <path d="M708.2 364.5 L718.6 367.4 L716.3 383 L708.2 380.7 Z" fill="#e03a22" opacity="0.85"/>
 <!-- green ring front part over disc -->
 <g clip-path="url(#gclip)"><g clip-path="url(#frontclip)"><path d="M790.9 325.4 L786.7 340.0 L777.4 324.5 L778.9 312.7Z" fill="#27a527"/><path d="M786.7 340.0 L780.1 353.2 L773.8 335.7 L777.4 324.5Z" fill="#1e6c1e"/><path d="M780.1 353.2 L771.3 364.5 L768.3 345.7 L773.8 335.7Z" fill="#27a527"/><path d="M771.3 364.5 L760.6 373.4 L761.2 354.1 L768.3 345.7Z" fill="#1e6c1e"/><path d="M760.6 373.4 L748.7 379.5 L752.7 360.6 L761.2 354.1Z" fill="#27a527"/><path d="M748.7 379.5 L735.9 382.6 L743.3 364.9 L752.7 360.6Z" fill="#1e6c1e"/><path d="M735.9 382.6 L722.8 382.4 L733.3 366.8 L743.3 364.9Z" fill="#27a527"/><path d="M722.8 382.4 L710.1 379.1 L723.3 366.2 L733.3 366.8Z" fill="#1e6c1e"/><path d="M710.1 379.1 L698.2 372.7 L713.5 363.2 L723.3 366.2Z" fill="#27a527"/><path d="M698.2 372.7 L687.8 363.5 L704.5 357.8 L713.5 363.2Z" fill="#1e6c1e"/><path d="M687.8 363.5 L679.1 352.0 L696.6 350.3 L704.5 357.8Z" fill="#27a527"/><path d="M679.1 352.0 L672.7 338.6 L690.3 341.1 L696.6 350.3Z" fill="#1e6c1e"/><path d="M672.7 338.6 L668.8 323.9 L685.6 330.5 L690.3 341.1Z" fill="#27a527"/><path d="M668.8 323.9 L667.6 308.6 L683.0 318.9 L685.6 330.5Z" fill="#1e6c1e"/><path d="M667.6 308.6 L669.1 293.4 L682.5 307.1 L683.0 318.9Z" fill="#27a527"/><path d="M669.1 293.4 L673.3 278.8 L684.0 295.3 L682.5 307.1Z" fill="#1e6c1e"/><path d="M673.3 278.8 L679.9 265.6 L687.6 284.1 L684.0 295.3Z" fill="#27a527"/><path d="M679.9 265.6 L688.7 254.3 L693.1 274.1 L687.6 284.1Z" fill="#1e6c1e"/><path d="M688.7 254.3 L699.4 245.4 L700.2 265.7 L693.1 274.1Z" fill="#27a527"/><path d="M699.4 245.4 L711.3 239.3 L708.7 259.2 L700.2 265.7Z" fill="#1e6c1e"/><path d="M711.3 239.3 L724.1 236.2 L718.1 254.9 L708.7 259.2Z" fill="#27a527"/><path d="M724.1 236.2 L737.2 236.4 L728.1 253.0 L718.1 254.9Z" fill="#1e6c1e"/><path d="M737.2 236.4 L749.9 239.7 L738.1 253.6 L728.1 253.0Z" fill="#27a527"/><path d="M749.9 239.7 L761.8 246.1 L747.9 256.6 L738.1 253.6Z" fill="#1e6c1e"/><path d="M761.8 246.1 L772.2 255.3 L756.9 262.0 L747.9 256.6Z" fill="#27a527"/><path d="M772.2 255.3 L780.9 266.8 L764.8 269.5 L756.9 262.0Z" fill="#1e6c1e"/><path d="M780.9 266.8 L787.3 280.2 L771.1 278.7 L764.8 269.5Z" fill="#27a527"/><path d="M787.3 280.2 L791.2 294.9 L775.8 289.3 L771.1 278.7Z" fill="#1e6c1e"/><path d="M791.2 294.9 L792.4 310.2 L778.4 300.9 L775.8 289.3Z" fill="#27a527"/><path d="M792.4 310.2 L790.9 325.4 L778.9 312.7 L778.4 300.9Z" fill="#1e6c1e"/></g></g>
 <!-- blue arrow -->
 <g opacity="0.8" fill="#1c1cb0">
  <path d="M726.8 206 L740.7 229.6 L712.7 229.6 Z"/>
  <rect x="718.5" y="229.6" width="17" height="24"/>
 </g>
 <!-- cyan sphere + end effector -->
 <circle cx="726" cy="309.5" r="26.5" fill="url(#cyan)" opacity="0.85"/>
 <path d="M708.5 312 Q725 306 742.3 312 L742.3 334 Q725 339 708.5 334 Z" fill="#86cbb2" opacity="0.85"/>
 <!-- blue ring -->
 <ellipse cx="726" cy="311" rx="73.5" ry="7.8" fill="none" stroke="#1c4cd4" stroke-width="2.4" opacity="0.9"/>
 <!-- red arrows -->
 <g opacity="0.8">
  <path d="M645.8 304.7 L668 292.2 L668 318.2 Z" fill="#a81616"/>
  <path d="M645.8 304.7 L668 292.2 L668 302 Z" fill="#c42020"/>
  <rect x="668" y="300" width="16" height="11" fill="#8a1616" opacity="0.6"/>
  <path d="M819.4 317.3 L792.4 301.8 L792.4 330.8 Z" fill="#c01818"/>
  <path d="M819.4 317.3 L792.4 322 L792.4 330.8 Z" fill="#8e1414"/>
  <rect x="768" y="308" width="25" height="17" fill="#b04020" opacity="0.55"/>
 </g>
 <!-- green balls -->
 <circle cx="681.5" cy="319.2" r="13" fill="url(#gball)" opacity="0.85"/>
 <circle cx="681.5" cy="319.2" r="11.5" fill="none" stroke="#0c7a0c" stroke-width="2.5" opacity="0.6"/>
 <circle cx="765.4" cy="303.8" r="11" fill="#1c9a1c" opacity="0.6"/>
 <circle cx="765.4" cy="303.8" r="8" fill="none" stroke="#146a14" stroke-width="2" opacity="0.5"/>
</g>

</g></svg>
<svg class="a" style="left:545px;top:412px" width="8" height="12"><path d="M6 2.8 v6.4 l-3.3-3.2z" fill="#555"/></svg>
<svg class="a" style="left:923px;top:412px" width="8" height="12"><path d="M2.3 2.8 v6.4 l3.3-3.2z" fill="#555"/></svg>
<svg class="a" style="left:540px;top:410px" width="4" height="20"><g fill="#cdcdcd"><rect x="0.6" y="3.00" width="1" height="1"/><rect x="0.6" y="5.45" width="1" height="1"/><rect x="0.6" y="7.90" width="1" height="1"/><rect x="0.6" y="10.35" width="1" height="1"/><rect x="0.6" y="12.80" width="1" height="1"/><rect x="0.6" y="15.25" width="1" height="1"/></g></svg>
</body></html>
